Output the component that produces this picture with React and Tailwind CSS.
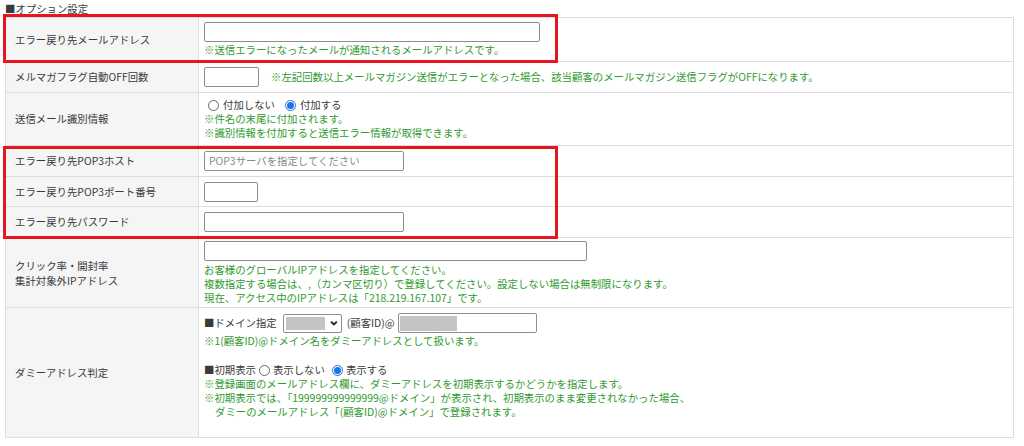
import React from "react";

const F = { fontFamily: '"Noto Sans CJK JP", "Noto Sans", sans-serif' };

function Row({ h, label, children, top = true }) {
  return (
    <div className={`flex ${top ? "border-t border-[#dcdcdc]" : ""}`} style={{ height: h }}>
      <div className="w-[193px] shrink-0 bg-[#f4f5f4] border-r border-[#dcdcdc] flex items-center pl-[9px] text-[#3a3a3a]">
        {label}
      </div>
      <div className="flex-1 pl-[5px] flex flex-col justify-center">{children}</div>
    </div>
  );
}

function Input({ w, placeholder, children }) {
  return (
    <div
      className={`relative h-[20px] border border-[#8d8d8d] rounded-[2px] bg-white text-[#888] flex items-center pl-[4px] ${w}`}
    >
      {placeholder}
      {children}
    </div>
  );
}

function Radio({ checked }) {
  return checked ? (
    <span className="inline-flex w-[11px] h-[11px] rounded-full border-[1px] border-[#1a73e8] items-center justify-center bg-white">
      <span className="w-[7px] h-[7px] rounded-full bg-[#1a73e8]" />
    </span>
  ) : (
    <span className="inline-block w-[11px] h-[11px] rounded-full border border-[#666] bg-white" />
  );
}

const G = "text-[#2f9a2f] leading-[14px]";

export default function App() {
  return (
    <div className="relative w-[1024px] h-[446px] bg-white text-[10.4px] text-[#3a3a3a]" style={F}>
      <div className="pl-[5px] h-[17px] leading-[17px]">■オプション設定</div>
      <div className="ml-[5px] w-[1009px] border border-[#dcdcdc]">
        <Row h={43} label="エラー戻り先メールアドレス" top={false}>
          <Input w="w-[336px]" />
          <div className={`${G} mt-[1px]`}>※送信エラーになったメールが通知されるメールアドレスです。</div>
        </Row>
        <Row h={31} label="メルマガフラグ自動OFF回数">
          <div className="flex items-center gap-[12px]">
            <Input w="w-[55px]" />
            <span className={G}>※左記回数以上メールマガジン送信がエラーとなった場合、該当顧客のメールマガジン送信フラグがOFFになります。</span>
          </div>
        </Row>
        <Row h={53} label="送信メール識別情報">
          <div className="flex items-center gap-[4px] leading-[14px] pl-[4px]">
            <Radio />
            <span>付加しない</span>
            <span className="ml-[2px]" />
            <Radio checked />
            <span>付加する</span>
          </div>
          <div className={G}>※件名の末尾に付加されます。</div>
          <div className={G}>※識別情報を付加すると送信エラー情報が取得できます。</div>
        </Row>
        <Row h={31} label="エラー戻り先POP3ホスト">
          <Input w="w-[200px]" placeholder="POP3サーバを指定してください" />
        </Row>
        <Row h={30} label="エラー戻り先POP3ポート番号">
          <Input w="w-[54px]" />
        </Row>
        <Row h={31} label="エラー戻り先パスワード">
          <Input w="w-[200px]" />
        </Row>
        <Row
          h={70}
          label={
            <div className="leading-[15px]">
              クリック率・開封率
              <br />
              集計対象外IPアドレス
            </div>
          }
        >
          <Input w="w-[383px]" />
          <div className={`${G} mt-[2px]`}>お客様のグローバルIPアドレスを指定してください。</div>
          <div className={G}>複数指定する場合は、,（カンマ区切り）で登録してください。設定しない場合は無制限になります。</div>
          <div className={G}>現在、アクセス中のIPアドレスは「218.219.167.107」です。</div>
        </Row>
        <Row h={130} label="ダミーアドレス判定">
          <div className="flex flex-col justify-start h-full pt-[5px]">
            <div className="flex items-center h-[20px]">
              <span>■ドメイン指定</span>
              <div className="ml-[6px] w-[59px] h-[19px] border border-[#8d8d8d] rounded-[2px] bg-white flex items-center px-[2px]">
                <span className="w-[40px] h-[13px] bg-[#c4c4c4]" />
                <svg width="10" height="10" viewBox="0 0 10 10" className="ml-[4px]">
                  <path d="M2 3.5 L5 6.5 L8 3.5" fill="none" stroke="#222" strokeWidth="1.8" />
                </svg>
              </div>
              <span className="ml-[5px]">(顧客ID)@</span>
              <div className="ml-[3px] w-[139px] h-[20px] border border-[#8d8d8d] rounded-[2px] bg-white flex items-center pl-[1px]">
                <span className="w-[57px] h-[15px] bg-[#c4c4c4]" />
              </div>
            </div>
            <div className={`${G} mt-[1px]`}>※1(顧客ID)@ドメイン名をダミーアドレスとして扱います。</div>
            <div className="h-[14px]" />
            <div className="flex items-center gap-[3px] leading-[14px] mt-[1px]">
              <span>■初期表示</span>
              <Radio />
              <span>表示しない</span>
              <span className="ml-[1px]" />
              <Radio checked />
              <span>表示する</span>
            </div>
            <div className={G}>※登録画面のメールアドレス欄に、ダミーアドレスを初期表示するかどうかを指定します。</div>
            <div className={G}>※初期表示では、「199999999999999@ドメイン」が表示され、初期表示のまま変更されなかった場合、</div>
            <div className={`${G} pl-[11px]`}>ダミーのメールアドレス「(顧客ID)@ドメイン」で登録されます。</div>
          </div>
        </Row>
      </div>
      {/* annotation boxes */}
      <div className="absolute left-[3px] top-[14px] w-[555px] h-[49px] border-[3px] border-[#e8141e]" />
      <div className="absolute left-[3px] top-[146px] w-[555px] h-[93px] border-[3px] border-[#e8141e]" />
    </div>
  );
}
